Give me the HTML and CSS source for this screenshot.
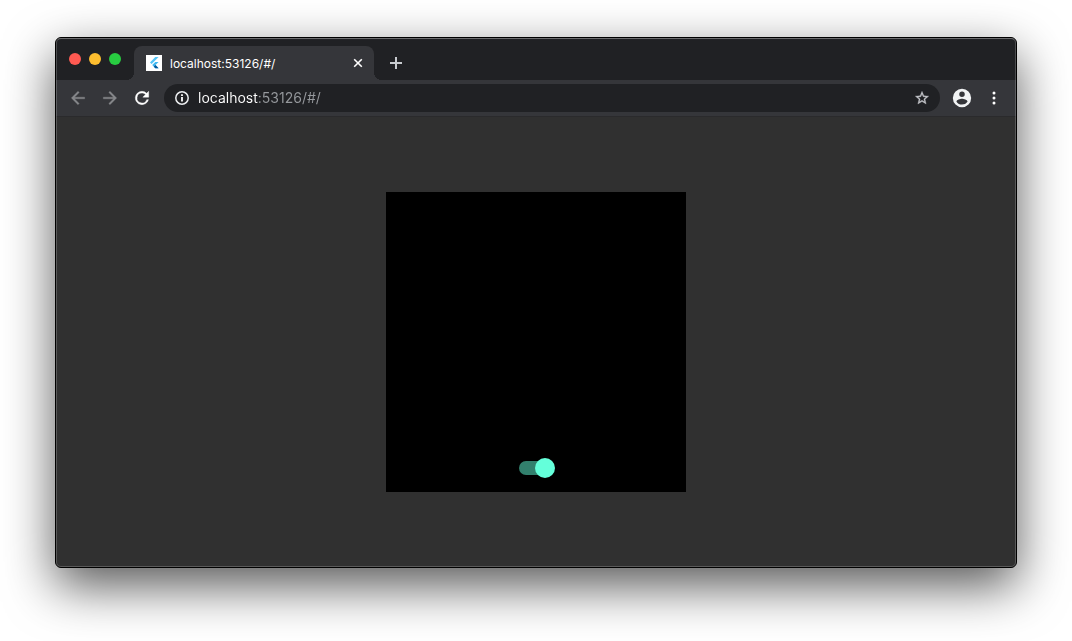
FILE: index.html
```html
<!DOCTYPE html>
<html lang="en">
<head>
<meta charset="utf-8">
<meta name="viewport" content="width=device-width, initial-scale=1">
<title>localhost:53126/#/</title>
<link rel="stylesheet" href="styles.css">
</head>
<body>
<div class="window">
  <header class="tab-strip">
    <div class="lights">
      <button class="light light-close" aria-label="Close window"></button>
      <button class="light light-min" aria-label="Minimize window"></button>
      <button class="light light-max" aria-label="Zoom window"></button>
    </div>
    <div class="tab">
      <svg class="favicon" viewBox="0 0 16 16" aria-hidden="true">
        <rect width="16" height="16" fill="#fff"/>
        <path d="M9.3 2H12.6L5.6 9L4 7.4Z" fill="#54c5f8"/>
        <path d="M9.3 7H12.6L9.5 10.1L12.6 13.2H9.3L6.2 10.1Z" fill="#40b8f0"/>
        <path d="M7.8 11.7L9.5 10.1L12.6 13.2H9.3Z" fill="#01579b"/>
      </svg>
      <span class="tab-title">localhost:53126/#/</span>
      <button class="icon-button tab-close" aria-label="Close tab">
        <svg width="10" height="10" viewBox="0 0 10 10"><path d="M1.2 1.2L8.8 8.8M8.8 1.2L1.2 8.8" stroke="#fff" stroke-width="1.6" fill="none"/></svg>
      </button>
    </div>
    <button class="icon-button new-tab" aria-label="New tab">
      <svg width="12" height="12" viewBox="0 0 12 12"><path d="M6 0V12M0 6H12" stroke="#c8cbcf" stroke-width="2" fill="none"/></svg>
    </button>
  </header>
  <nav class="toolbar">
    <button class="icon-button nav-button" aria-label="Back">
      <svg width="20" height="20" viewBox="0 0 24 24"><path fill="#87888b" stroke="#87888b" stroke-width=".4" d="M20 11H7.83l5.59-5.59L12 4l-8 8 8 8 1.41-1.41L7.83 13H20z"/></svg>
    </button>
    <button class="icon-button nav-button" aria-label="Forward">
      <svg width="20" height="20" viewBox="0 0 24 24"><path fill="#87888b" stroke="#87888b" stroke-width=".4" d="M12 4l-1.41 1.41L16.17 11H4v2h12.17l-5.58 5.59L12 20l8-8z"/></svg>
    </button>
    <button class="icon-button nav-button" aria-label="Reload">
      <svg width="20" height="20" viewBox="0 0 24 24"><path fill="#fff" stroke="#fff" stroke-width=".5" d="M17.65 6.35A7.96 7.96 0 0 0 12 4a8 8 0 1 0 7.73 10h-2.08A6 6 0 1 1 12 6c1.66 0 3.14.69 4.22 1.78L13 11h7V4z"/></svg>
    </button>
    <div class="omnibox">
      <button class="icon-button" aria-label="Site information">
        <svg width="16" height="16" viewBox="0 0 16 16"><circle cx="8" cy="8" r="6.2" fill="none" stroke="#eceef0" stroke-width="1.5"/><path d="M7.1 7H8.9V11.5H7.1ZM7.1 4.3H8.9V6H7.1Z" fill="#fff"/></svg>
      </button>
      <input class="url" type="text" aria-label="Address" value="localhost:53126/#/" spellcheck="false">
      <button class="icon-button" aria-label="Bookmark">
        <svg width="16" height="16" viewBox="0 0 24 24"><path fill="#c4c6ca" stroke="#c4c6ca" stroke-width=".5" d="M22 9.24l-7.19-.62L12 2 9.19 8.63 2 9.24l5.46 4.73L5.82 21 12 17.27 18.18 21l-1.63-7.03zM12 15.4l-3.76 2.27 1-4.28-3.32-2.88 4.38-.38L12 6.1l1.71 4.04 4.38.38-3.32 2.88 1 4.28z"/></svg>
      </button>
    </div>
    <button class="icon-button nav-button" aria-label="Profile">
      <svg width="22" height="22" viewBox="0 0 24 24"><path fill="#f1f3f4" d="M12 2a10 10 0 1 0 0 20 10 10 0 0 0 0-20zm0 3a3 3 0 1 1 0 6 3 3 0 0 1 0-6zm0 14.2a7.2 7.2 0 0 1-6-3.22c.03-1.99 4-3.08 6-3.08s5.97 1.09 6 3.08a7.2 7.2 0 0 1-6 3.22z"/></svg>
    </button>
    <button class="icon-button nav-button" aria-label="Menu">
      <svg width="4" height="14" viewBox="0 0 4 14"><g fill="#fff"><circle cx="2" cy="2" r="1.5"/><circle cx="2" cy="7" r="1.5"/><circle cx="2" cy="12" r="1.5"/></g></svg>
    </button>
  </nav>
  <main class="page">
    <div class="panel">
      <input class="switch" type="checkbox" role="switch" aria-label="Dark theme" checked>
    </div>
  </main>
</div>
</body>
</html>
```
FILE: styles.css
```css
* {
  box-sizing: border-box;
}

body {
  display: flex;
  min-height: 100vh;
  margin: 0;
  padding: 37px 55px 73px;
  background: #fff;
  font-family: Inter, "Liberation Sans", sans-serif;
}

button {
  padding: 0;
  border: 0;
  background: none;
}

.window {
  position: relative;
  display: flex;
  flex: 1;
  flex-direction: column;
  border: 1px solid #000;
  border-radius: 6px;
  background: #303030;
  box-shadow: 0 18px 50px rgba(0, 0, 0, 0.66);
}

/* Light rim just inside the black outline */
.window::after {
  position: absolute;
  inset: 0;
  border: 1px solid rgba(255, 255, 255, 0.2);
  border-top-color: rgba(255, 255, 255, 0.34);
  border-radius: 5px;
  content: "";
  pointer-events: none;
}

.tab-strip {
  display: flex;
  align-items: flex-end;
  height: 42px;
  padding-left: 13px;
  border-radius: 5px 5px 0 0;
  background: #202124;
}

.lights {
  display: flex;
  gap: 8px;
  align-items: center;
  width: 65px;
  height: 42px;
}

.light {
  width: 12px;
  height: 12px;
  border-radius: 50%;
}

.light-close {
  background: #ff5a52;
}

.light-min {
  background: #fdbe2f;
}

.light-max {
  background: #28cc41;
}

.tab {
  position: relative;
  display: flex;
  gap: 8px;
  align-items: center;
  width: 240px;
  height: 34px;
  padding: 0 8px 0 12px;
  border-radius: 8px 8px 0 0;
  background: #35363a;
}

.tab::before,
.tab::after {
  position: absolute;
  bottom: 0;
  width: 8px;
  height: 8px;
  content: "";
}

.tab::before {
  right: 100%;
  background: radial-gradient(circle at 0 0, transparent 8px, #35363a 8px);
}

.tab::after {
  left: 100%;
  background: radial-gradient(circle at 100% 0, transparent 8px, #35363a 8px);
}

.favicon {
  width: 16px;
  height: 16px;
}

.tab-title {
  flex: 1;
  color: #fff;
  font-size: 12px;
}

.icon-button {
  display: flex;
  align-items: center;
  justify-content: center;
}

.tab-close {
  width: 16px;
  height: 16px;
}

.new-tab {
  width: 28px;
  height: 34px;
  margin-left: 8px;
}

.toolbar {
  display: flex;
  align-items: center;
  height: 37px;
  padding: 0 6px 1px;
  border-bottom: 1px solid #2a2a2c;
  background: #35363a;
}

.nav-button {
  width: 32px;
  height: 28px;
}

.omnibox {
  display: flex;
  flex: 1;
  gap: 8px;
  align-items: center;
  height: 28px;
  margin: 0 6px;
  padding: 0 10px;
  border-radius: 14px;
  background: #202124;
}

/* The host name is white and the rest of the address is grey */
.url {
  flex: 1;
  min-width: 0;
  padding: 0;
  border: 0;
  outline: 0;
  background: linear-gradient(90deg, #fff 61px, #96999d 61px);
  -webkit-background-clip: text;
  background-clip: text;
  color: transparent;
  font: 14px/20px Inter, "Liberation Sans", sans-serif;
}

.page {
  display: flex;
  flex: 1;
  align-items: center;
  justify-content: center;
}

.panel {
  display: flex;
  align-items: flex-end;
  justify-content: center;
  width: 300px;
  height: 300px;
  padding: 0 0 14px 2px;
  background: #000;
}

.switch {
  display: flex;
  align-items: center;
  justify-content: flex-end;
  width: 36px;
  height: 20px;
  margin: 0;
  appearance: none;
}

.switch::before {
  width: 33px;
  height: 14px;
  border-radius: 7px;
  background: #32806d;
  content: "";
}

.switch::after {
  width: 20px;
  height: 20px;
  margin-left: -17px;
  border-radius: 50%;
  background: #64ffda;
  content: "";
}

.switch:not(:checked) {
  flex-direction: row-reverse;
}
```
